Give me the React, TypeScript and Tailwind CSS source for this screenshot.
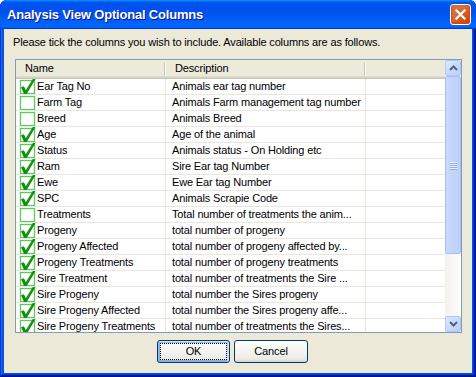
import React from "react";

type Row = { name: string; desc: string; checked: boolean };

const rows: Row[] = [
  { name: "Ear Tag No", desc: "Animals ear tag number", checked: true },
  { name: "Farm Tag", desc: "Animals Farm management tag number", checked: false },
  { name: "Breed", desc: "Animals Breed", checked: false },
  { name: "Age", desc: "Age of the animal", checked: true },
  { name: "Status", desc: "Animals status - On Holding etc", checked: true },
  { name: "Ram", desc: "Sire Ear tag Number", checked: true },
  { name: "Ewe", desc: "Ewe Ear tag Number", checked: true },
  { name: "SPC", desc: "Animals Scrapie Code", checked: true },
  { name: "Treatments", desc: "Total number of treatments the anim...", checked: false },
  { name: "Progeny", desc: "total number of progeny", checked: true },
  { name: "Progeny Affected", desc: "total number of progeny affected by...", checked: true },
  { name: "Progeny Treatments", desc: "total number of progeny treatments", checked: true },
  { name: "Sire Treatment", desc: "total number of treatments the Sire ...", checked: true },
  { name: "Sire Progeny", desc: "total number the Sires progeny", checked: true },
  { name: "Sire Progeny Affected", desc: "total number the Sires progeny affe...", checked: true },
  { name: "Sire Progeny Treatments", desc: "total number of treatments the Sires...", checked: true },
];

function CheckIcon({ checked }: { checked: boolean }) {
  return (
    <svg width="17" height="16" viewBox="0 0 17 16" className="shrink-0 overflow-visible">
      <rect x="1.5" y="1.5" width="14" height="13" fill="#ffffff" stroke="#5ccc5c" strokeWidth="1.3" />
      {checked && (
        <path
          d="M2 8.2 L4.8 7.2 L6.9 11 L14.2 -0.6 L16.9 -0.6 L7.7 15 L5.1 15 Z"
          fill="#178f17"
        />
      )}
    </svg>
  );
}

function Chevron({ up }: { up: boolean }) {
  return (
    <svg width="9" height="6" viewBox="0 0 9 6">
      <path
        d={up ? "M1 5 L4.5 1.5 L8 5" : "M1 1 L4.5 4.5 L8 1"}
        fill="none"
        stroke="#4d6185"
        strokeWidth="2"
      />
    </svg>
  );
}

export default function App() {
  return (
    <div className="w-[476px] h-[377px] bg-white font-['Liberation_Sans',Arial,sans-serif] text-[11px] tracking-[-0.15px] text-black">
      <div className="w-full h-full flex flex-col rounded-t-[7px] overflow-hidden bg-[#0055e5] shadow-[inset_-1px_-1px_#00138c,inset_1px_1px_#0831d9,inset_-2px_-2px_#001ea0,inset_2px_2px_#166aee,inset_-3px_-3px_#003bda,inset_3px_3px_#0855dd]">
        {/* Title bar */}
        <div className="h-[29px] shrink-0 flex items-center justify-between pl-[7px] pr-[5px] bg-[linear-gradient(180deg,#0997ff,#0053ee_8%,#0050ee_40%,#0066ff_88%,#0066ff_93%,#005bff_95%,#003dd7_96%,#003dd7)]">
          <span className="text-white font-bold text-[13px] tracking-[-0.2px] [text-shadow:1px_1px_#0f1089] font-['Liberation_Sans',Arial,sans-serif]">
            Analysis View Optional Columns
          </span>
          <div className="w-[21px] h-[21px] rounded-[3px] border border-white flex items-center justify-center bg-[radial-gradient(circle_at_90%_90%,#cc4600_0%,#dc6527_55%,#cd7546_70%)] shadow-[inset_0_-1px_2px_1px_#da4600]">
            <svg width="11" height="11" viewBox="0 0 11 11">
              <path d="M1.5 1.5 L9.5 9.5 M9.5 1.5 L1.5 9.5" stroke="#ffffff" strokeWidth="2.2" strokeLinecap="square" />
            </svg>
          </div>
        </div>

        {/* Client area */}
        <div className="flex-1 mx-[4px] mb-[4px] bg-[#ece9d8] flex flex-col">
          <div className="pt-[7px] pl-[9px] leading-[13px] h-[20px]">
            Please tick the columns you wish to include. Available columns are as follows.
          </div>

          {/* List view */}
          <div className="ml-[11px] mt-[10px] w-[447px] h-[274px] border border-[#7f9db9] bg-white flex overflow-hidden">
            <div className="w-[429px] flex flex-col overflow-hidden">
              {/* Header */}
              <div className="h-[19px] shrink-0 flex bg-[#ebeadb] shadow-[inset_0_-1px_#cbc7b8,inset_0_-2px_#d6d2c2,inset_0_-3px_#e2decd]">
                <div className="w-[150px] flex items-center pl-[9px] pb-[2px] relative">
                  Name
                  <div className="absolute right-0 top-[3px] bottom-[3px] w-[2px] border-l border-[#c7c5b2] border-r border-r-white" />
                </div>
                <div className="w-[200px] flex items-center pl-[9px] pb-[2px] relative">
                  Description
                  <div className="absolute right-0 top-[3px] bottom-[3px] w-[2px] border-l border-[#c7c5b2] border-r border-r-white" />
                </div>
                <div className="flex-1" />
              </div>
              {/* Rows */}
              <div className="flex-1 overflow-hidden">
                {rows.map((r) => (
                  <div key={r.name} className="h-[16px] flex border-b border-[#e9e7dc] leading-[15px]">
                    <div className="w-[150px] flex items-start pl-[3px] border-r border-[#e9e7dc] whitespace-nowrap overflow-hidden">
                      <CheckIcon checked={r.checked} />
                      <span className="ml-[1px]">{r.name}</span>
                    </div>
                    <div className="w-[200px] pl-[6px] border-r border-[#e9e7dc] whitespace-nowrap overflow-hidden">
                      {r.desc}
                    </div>
                    <div className="flex-1" />
                  </div>
                ))}
              </div>
            </div>

            {/* Scrollbar */}
            <div className="w-[16px] flex flex-col bg-[linear-gradient(90deg,#f3f1ec,#fefefb)]">
              <div className="h-[16px] shrink-0 rounded-[2px] border border-[#b4c8f6] bg-[linear-gradient(135deg,#dce8ff,#b9cdfa)] flex items-center justify-center">
                <Chevron up />
              </div>
              <div className="h-[178px] shrink-0 rounded-[2px] border border-[#a9bff3] bg-[linear-gradient(90deg,#cad9fd,#bcd0fb)] flex items-center justify-center">
                <div className="flex flex-col gap-[1px]">
                  <div className="w-[7px] h-[1px] bg-[#eef4fe] shadow-[0_1px_#8caaf0]" />
                  <div className="w-[7px] h-[1px] bg-[#eef4fe] shadow-[0_1px_#8caaf0]" />
                  <div className="w-[7px] h-[1px] bg-[#eef4fe] shadow-[0_1px_#8caaf0]" />
                  <div className="w-[7px] h-[1px] bg-[#eef4fe] shadow-[0_1px_#8caaf0]" />
                </div>
              </div>
              <div className="flex-1" />
              <div className="h-[16px] shrink-0 rounded-[2px] border border-[#b4c8f6] bg-[linear-gradient(135deg,#dce8ff,#b9cdfa)] flex items-center justify-center">
                <Chevron up={false} />
              </div>
            </div>
          </div>

          {/* Buttons */}
          <div className="flex gap-[4px] pl-[153px] mt-[7px]">
            <button className="w-[73px] h-[23px] rounded-[3px] border border-[#003c74] bg-[linear-gradient(180deg,#ffffff,#ecebe6_86%,#d6d0c5)] shadow-[inset_-1px_1px_#cee7ff,inset_1px_2px_#98b8ea,inset_-2px_2px_#bcd4f6,inset_1px_-1px_#89ade4,inset_2px_-2px_#89ade4] outline-1 outline-dotted outline-black -outline-offset-4 flex items-center justify-center">
              OK
            </button>
            <button className="w-[74px] h-[23px] rounded-[3px] border border-[#003c74] bg-[linear-gradient(180deg,#ffffff,#ecebe6_86%,#d6d0c5)] flex items-center justify-center">
              Cancel
            </button>
          </div>
        </div>
      </div>
    </div>
  );
}
